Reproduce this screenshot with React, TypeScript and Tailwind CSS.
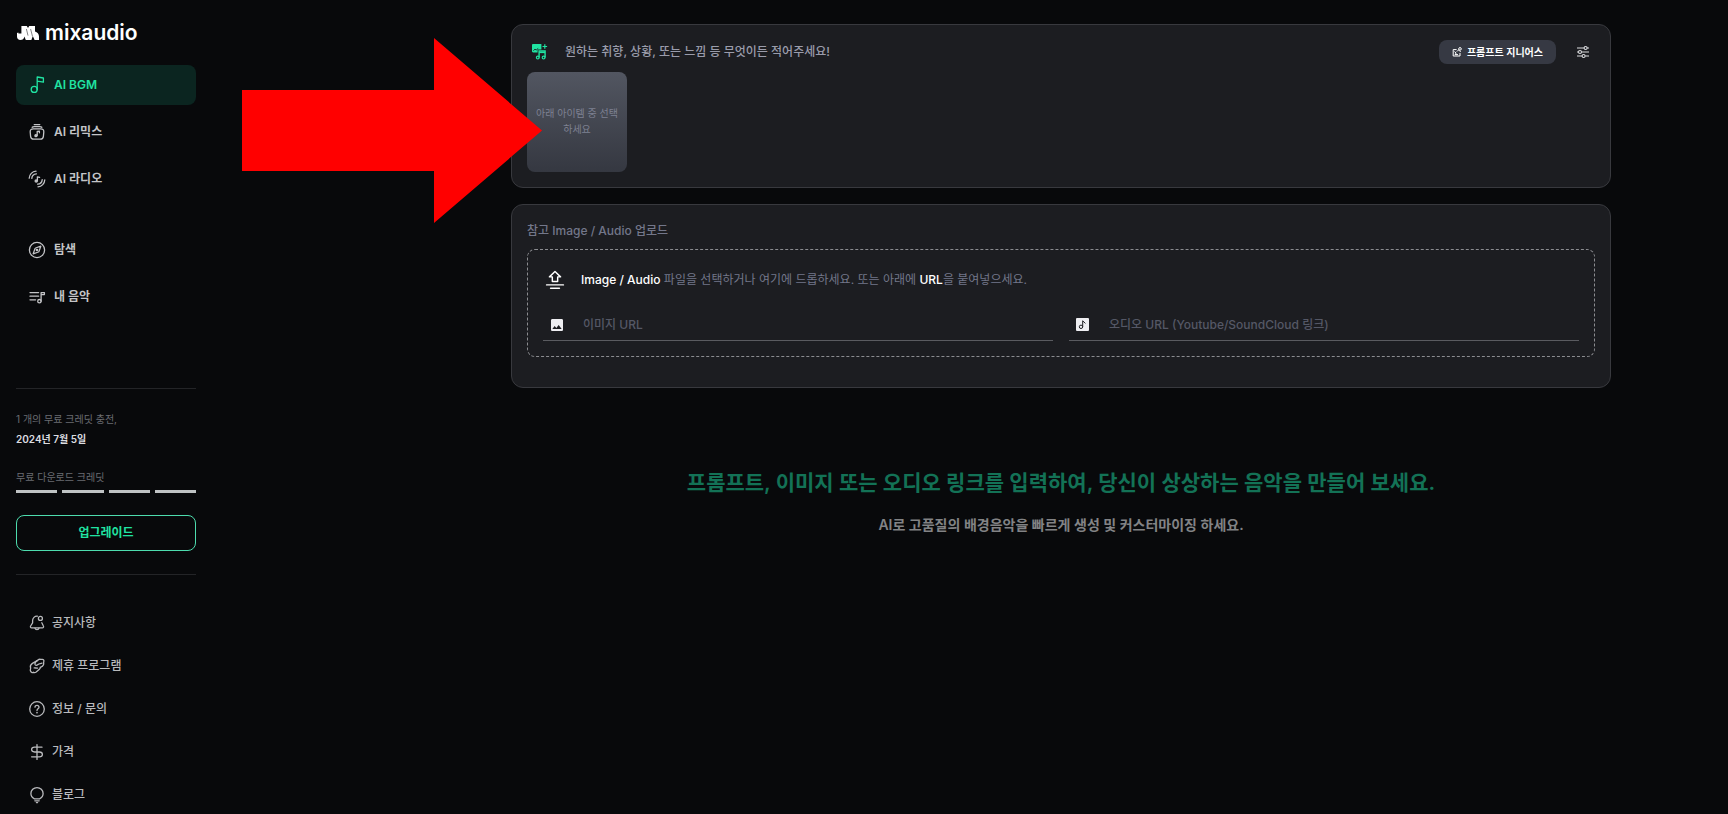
import type { ReactNode } from "react";
import { MdImage } from "react-icons/md";

type IconProps = { children: ReactNode; size?: string };

const Icon = ({ children, size = "size-[18px]" }: IconProps) => (
    <svg
        viewBox="0 0 18 18"
        fill="none"
        stroke="currentColor"
        strokeWidth="1.3"
        strokeLinecap="round"
        strokeLinejoin="round"
        className={`${size} shrink-0`}
        aria-hidden="true"
    >
        {children}
    </svg>
);

const NoteIcon = () => (
    <Icon>
        <circle cx="6.2" cy="13.4" r="3" />
        <path d="M9.2 13.4V1L15.4 2V6.2L9.2 5.2" />
    </Icon>
);

const RemixIcon = () => (
    <Icon>
        <path d="M6.2 1.6H11.8M4.2 4.2C4.8 3.6 5.6 3.6 6.2 3.6H11.8C12.4 3.6 13.2 3.6 13.8 4.2" />
        <path d="M5.2 5.8H12.8C14.8 5.8 16 7 15.8 9L15.4 13.4C15.2 15.2 14.2 16.2 12.4 16.2H5.6C3.8 16.2 2.8 15.2 2.6 13.4L2.2 9C2 7 3.2 5.8 5.2 5.8Z" />
        <circle cx="7.9" cy="12.7" r="1" fill="currentColor" />
        <path d="M9.2 12.6V8.4L11.4 8.2V9.8" />
    </Icon>
);

const RadioIcon = () => (
    <Icon>
        <path d="M1.2 8.2C1.4 4.4 4.2 1.4 8 1.2M3.8 8.4C4 5.8 5.8 4 8.4 3.8" />
        <path d="M16.8 9.8C16.6 13.6 13.8 16.6 10 16.8M14.2 9.6C14 12.2 12.2 14 9.6 14.2" />
        <circle cx="8.2" cy="11" r="1.1" fill="currentColor" />
        <path d="M9.4 10.8V6.8L11.6 7.4" />
    </Icon>
);

const CompassIcon = () => (
    <Icon>
        <circle cx="9" cy="9" r="7.6" />
        <path d="M12.8 5.2L11 10.4C10.9 10.7 10.7 10.9 10.4 11L5.2 12.8L7 7.6C7.1 7.3 7.3 7.1 7.6 7Z" />
        <circle cx="9" cy="9" r=".7" fill="currentColor" />
    </Icon>
);

const PlaylistIcon = () => (
    <Icon>
        <path d="M2 4.6H10.6M2 8.2H10.6M2 11.8H7.6" />
        <circle cx="11.4" cy="13.2" r="1.7" />
        <path d="M13.1 13.2V4.6H16.4V6.6H13.1" />
    </Icon>
);

const BellIcon = () => (
    <Icon>
        <path d="M9.4 2.2C6.6 2 4.6 4 4.6 6.6V8.8L2.6 12C2.1 12.9 2.6 13.8 3.6 13.8H14.4C15.4 13.8 15.9 12.9 15.4 12L13.8 8.8" />
        <circle cx="12.4" cy="4.4" r="2" />
        <path d="M7 14.2C7.4 16 10.6 16 11 14.2" />
    </Icon>
);

const PartnerIcon = () => (
    <Icon>
        <path d="M9.2 3.6L11 2.4C12 1.9 12.9 2.6 13.6 2.4C15.4 1.9 16.4 3.4 15.7 5C15.4 5.8 16 6.6 15.5 7.8C15 9 13.8 9.8 12.4 10.4" />
        <path d="M9.2 3.6L4.4 6.4C2.4 7.7 2 9.4 2.6 11C2.8 11.8 2 12.7 2.4 13.8C2.9 15.4 4.4 16 5.4 15.2C6.4 16 7.4 15.6 8.2 15L11.4 12.2C12.2 11.4 12.6 11 12.4 10.4" />
        <path d="M9.2 3.6C7.6 4.8 6.6 6 7 7.4C7.4 8.6 8.8 8.6 9.6 7.8C10.6 6.8 12.2 6.6 14 6.2" />
        <path d="M6.2 10.8C7.4 10.6 8.4 11.4 9.6 11.2" />
    </Icon>
);

const HelpIcon = () => (
    <Icon>
        <circle cx="9" cy="9" r="7.3" />
        <path d="M7 7.2C7 4.7 11 4.7 11 7.2C11 8.8 9 8.8 9 10.4" />
        <circle cx="9" cy="12.6" r=".3" fill="currentColor" />
    </Icon>
);

const DollarIcon = () => (
    <Icon>
        <path d="M9 1.6V16.4M14 4.2H6.6C4.6 4.2 3.6 5.2 3.6 6.6S4.6 9 6.6 9H11.4C13.4 9 14.4 10 14.4 11.4S13.4 13.8 11.4 13.8H3.6" />
    </Icon>
);

const BulbIcon = () => (
    <Icon>
        <path d="M6.4 12.8C4.2 11.8 2.9 10 2.9 7.6C2.9 4.2 5.6 1.6 9 1.6S15.1 4.2 15.1 7.6C15.1 10 13.8 11.8 11.6 12.8Z" />
        <path d="M6.8 14.8H11.2M8.4 16.6H9.6" />
    </Icon>
);

const UploadIcon = () => (
    <Icon size="size-5">
        <path d="M9 1.4L14 6.2H11.4V10.4H6.6V6.2H4Z" />
        <path d="M1.4 13.4H16.6M5 16.4H13" />
    </Icon>
);

const TuneIcon = () => (
    <svg viewBox="0 0 14 14" fill="none" stroke="currentColor" strokeWidth="1.1" className="size-3.5" aria-hidden="true">
        <path d="M1 3H8M11 3H13M1 7H2.4M5.6 7H13M1 11H6M9.2 11H13" />
        <circle cx="9.6" cy="3" r="1.5" />
        <circle cx="4" cy="7" r="1.5" />
        <circle cx="7.6" cy="11" r="1.5" />
    </svg>
);

const GeniusIcon = () => (
    <svg viewBox="0 0 10 10" fill="none" stroke="currentColor" strokeWidth="1" className="size-2.5" aria-hidden="true">
        <path d="M4.6 2.6H1.2V9H8V6M2.4 4.6L4.2 6L3 7.6H6" />
        <circle cx="8" cy="1.9" r="1.3" />
        <path d="M4.8 4.6C5.4 3.6 6 3.2 7 2.8M7.4 3.4L8.6 5" />
    </svg>
);

const PromptIcon = () => (
    <svg viewBox="0 0 18 18" className="size-[18px] shrink-0 text-[#20e3a2]" fill="currentColor" aria-hidden="true">
        <path d="M2.2 1H10.4V6.4H6.6V9.4H2.2C1.5 9.4 1 8.9 1 8.2V2.2C1 1.5 1.5 1 2.2 1Z" />
        <path d="M2.4 7.6L4 6.2L5.2 7L7.2 5.4" stroke="#1c1d21" strokeWidth=".9" fill="none" />
        <path d="M13.8 1.2V5.8M11.5 3.5H16.1" stroke="currentColor" strokeWidth="1.2" fill="none" />
        <path d="M8.1 14.6V8H14.1V14.6" stroke="currentColor" strokeWidth="1.4" fill="none" />
        <path d="M8 9.4H14" stroke="currentColor" strokeWidth="1.4" />
        <circle cx="6.8" cy="14.6" r="1.4" stroke="currentColor" strokeWidth="1.2" fill="none" />
        <circle cx="12.6" cy="14.6" r="1.4" stroke="currentColor" strokeWidth="1.2" fill="none" />
    </svg>
);

const AudioFileIcon = () => (
    <svg viewBox="0 0 13 13" className="size-[13px] shrink-0" aria-hidden="true">
        <rect width="13" height="13" rx="1" fill="#eeeef2" />
        <circle cx="5" cy="8.8" r="1.7" fill="none" stroke="#1c1d21" />
        <path d="M6.7 8.8V2.8L9.4 5.4" fill="none" stroke="#1c1d21" />
    </svg>
);

const mainMenu = [
    { label: "AI BGM", icon: <NoteIcon />, active: true },
    { label: "AI 리믹스", icon: <RemixIcon /> },
    { label: "AI 라디오", icon: <RadioIcon /> },
];

const libraryMenu = [
    { label: "탐색", icon: <CompassIcon /> },
    { label: "내 음악", icon: <PlaylistIcon /> },
];

const infoMenu = [
    { label: "공지사항", icon: <BellIcon /> },
    { label: "제휴 프로그램", icon: <PartnerIcon /> },
    { label: "정보 / 문의", icon: <HelpIcon /> },
    { label: "가격", icon: <DollarIcon /> },
    { label: "블로그", icon: <BulbIcon /> },
];

type MenuItem = { label: string; icon: ReactNode; active?: boolean };

const Menu = ({ items }: { items: MenuItem[] }) => (
    <ul className="flex flex-col gap-[7px]">
        {items.map(({ label, icon, active }) => (
            <li key={label}>
                <a
                    href="#"
                    className={`flex h-10 items-center gap-2 rounded-lg px-3 text-xs font-semibold ${
                        active ? "bg-[#0b2520] text-[#20e3a2]" : "text-[#c3c4c7]"
                    }`}
                >
                    {icon}
                    {label}
                </a>
            </li>
        ))}
    </ul>
);

const Logo = () => (
    <a href="#" className="mb-[23px] flex h-[18px] items-center gap-1.5 pl-px text-white">
        <svg viewBox="0 0 22 14" className="h-3.5 w-[22px]" fill="currentColor" aria-hidden="true">
            <path d="M4.4 0H9.8L11 2L12.2 0H18V5.4C20.4 6 22 8 22 10.4V14H17.6L15.8 10L14.4 14H8.8L7.4 10.4C7 12.6 5.6 14 3.4 14C1.4 14 0 12.6 0 10.6V7L1.4 6.4V7.6H4.4Z" />
            <path d="M9.4 3L11 9.6M13.6 3L15.4 10" stroke="#08090b" strokeWidth=".5" />
        </svg>
        <span className="text-[21px] leading-[18px] font-semibold">mixaudio</span>
    </a>
);

const Sidebar = () => (
    <aside className="h-svh w-[212px] shrink-0 overflow-hidden px-4 pt-6">
        <Logo />
        <nav className="flex flex-col gap-[31px]">
            <Menu items={mainMenu} />
            <Menu items={libraryMenu} />
        </nav>

        <section className="mt-[71px] border-y border-[#232427] pt-5 pb-[23px] text-[10px]">
            <p className="leading-5 text-[#6b6d73]">1 개의 무료 크레딧 충전,</p>
            <p className="leading-5 font-semibold text-[#dcdde0]">2024년 7월 5일</p>
            <p className="mt-5 leading-4 text-[#6b6d73]">무료 다운로드 크레딧</p>
            <div className="mt-[5px] grid grid-cols-4 gap-[5px]">
                <span className="h-[3px] bg-[#bfc3c4]" />
                <span className="h-[3px] bg-[#bfc3c4]" />
                <span className="h-[3px] bg-[#bfc3c4]" />
                <span className="h-[3px] bg-[#bfc3c4]" />
            </div>
            <button
                type="button"
                className="mt-[22px] h-9 w-full rounded-lg border border-[#4ddcae] text-xs font-semibold text-[#20e3a2]"
            >
                업그레이드
            </button>
        </section>

        <ul className="mt-[30px] flex flex-col gap-[7px]">
            {infoMenu.map(({ label, icon }) => (
                <li key={label}>
                    <a href="#" className="flex h-9 items-center gap-1.5 px-3 text-xs font-medium text-[#b9babd]">
                        {icon}
                        {label}
                    </a>
                </li>
            ))}
        </ul>
    </aside>
);

const PromptCard = () => (
    <section className="rounded-xl border border-[#38393e] bg-[#1c1d21] p-[15px]">
        <div className="mb-2 flex h-6 items-center">
            <label htmlFor="prompt" aria-label="프롬프트" className="ml-1">
                <PromptIcon />
            </label>
            <input
                id="prompt"
                type="text"
                placeholder="원하는 취향, 상황, 또는 느낌 등 무엇이든 적어주세요!"
                className="ml-4 min-w-0 flex-1 bg-transparent text-xs font-medium text-white outline-none placeholder:text-[#9a9cab]"
            />
            <button
                type="button"
                className="flex h-6 items-center gap-[5px] rounded-lg bg-[#363943] px-[13px] text-[10px] font-semibold text-white"
            >
                <GeniusIcon />
                프롬프트 지니어스
            </button>
            <button type="button" aria-label="설정" className="ml-[15px] flex size-6 items-center justify-center text-[#dcdde0]">
                <TuneIcon />
            </button>
        </div>
        <div className="flex size-[100px] items-center justify-center rounded-lg bg-linear-to-b from-[#525661] to-[#353841] px-2 pb-0.5 text-center text-[10px] leading-4 text-[#7e8192]">
            아래 아이템 중 선택하세요
        </div>
    </section>
);

const UploadCard = () => (
    <section className="rounded-xl border border-[#38393e] bg-[#1c1d21] px-[15px] pt-[15px] pb-[30px]">
        <h2 className="mb-2 text-xs leading-[21px] font-medium text-[#73778a]">참고 Image / Audio 업로드</h2>
        <div className="rounded-lg border border-dashed border-[#8b8c90] p-[15px]">
            <button type="button" className="flex h-[30px] w-full items-center gap-4 px-0.5 text-left text-xs text-[#73778a]">
                <span className="text-white">
                    <UploadIcon />
                </span>
                <span>
                    <span className="font-medium text-white">Image / Audio</span> 파일을 선택하거나 여기에 드롭하세요. 또는 아래에{" "}
                    <span className="font-medium text-white">URL</span>을 붙여넣으세요.
                </span>
            </button>
            <div className="mt-3.5 grid grid-cols-2 gap-4">
                <div className="flex h-8 items-center border-b border-[#5a5b60] pl-1.5">
                    <label htmlFor="image-url" aria-label="이미지 URL">
                        <MdImage className="size-4 text-[#eeeef2]" />
                    </label>
                    <input
                        id="image-url"
                        type="url"
                        placeholder="이미지 URL"
                        className="ml-[18px] min-w-0 flex-1 bg-transparent text-xs font-medium text-white outline-none placeholder:text-[#555866]"
                    />
                </div>
                <div className="flex h-8 items-center border-b border-[#5a5b60] pl-[7px]">
                    <label htmlFor="audio-url" aria-label="오디오 URL">
                        <AudioFileIcon />
                    </label>
                    <input
                        id="audio-url"
                        type="url"
                        placeholder="오디오 URL (Youtube/SoundCloud 링크)"
                        className="ml-5 min-w-0 flex-1 bg-transparent text-xs font-medium text-white outline-none placeholder:text-[#555866]"
                    />
                </div>
            </div>
        </div>
    </section>
);

// Red pointer that leads to the empty item slot
const Pointer = () => (
    <svg viewBox="0 0 300 185" className="pointer-events-none absolute top-[38px] left-[242px] h-[185px] w-[300px]" aria-hidden="true">
        <path d="M0 52H192V0L300 92.5L192 185V133H0Z" fill="#ff0000" />
    </svg>
);

export default function App() {
    return (
        <div className="relative flex min-h-svh bg-[#08090b] font-['Inter','Noto_Sans_CJK_KR',sans-serif]">
            <Sidebar />
            <main className="min-w-0 flex-1 pt-6 pl-[182px]">
                <div className="mx-auto flex max-w-[1100px] flex-col gap-4">
                    <PromptCard />
                    <UploadCard />
                    <div className="pt-[65px] text-center">
                        <h1 className="text-[21px] leading-7 font-semibold text-[#137256]">
                            프롬프트, 이미지 또는 오디오 링크를 입력하여, 당신이 상상하는 음악을 만들어 보세요.
                        </h1>
                        <p className="mt-[18px] text-sm leading-5 font-semibold text-[#828385]">
                            AI로 고품질의 배경음악을 빠르게 생성 및 커스터마이징 하세요.
                        </p>
                    </div>
                </div>
            </main>
            <Pointer />
        </div>
    );
}
